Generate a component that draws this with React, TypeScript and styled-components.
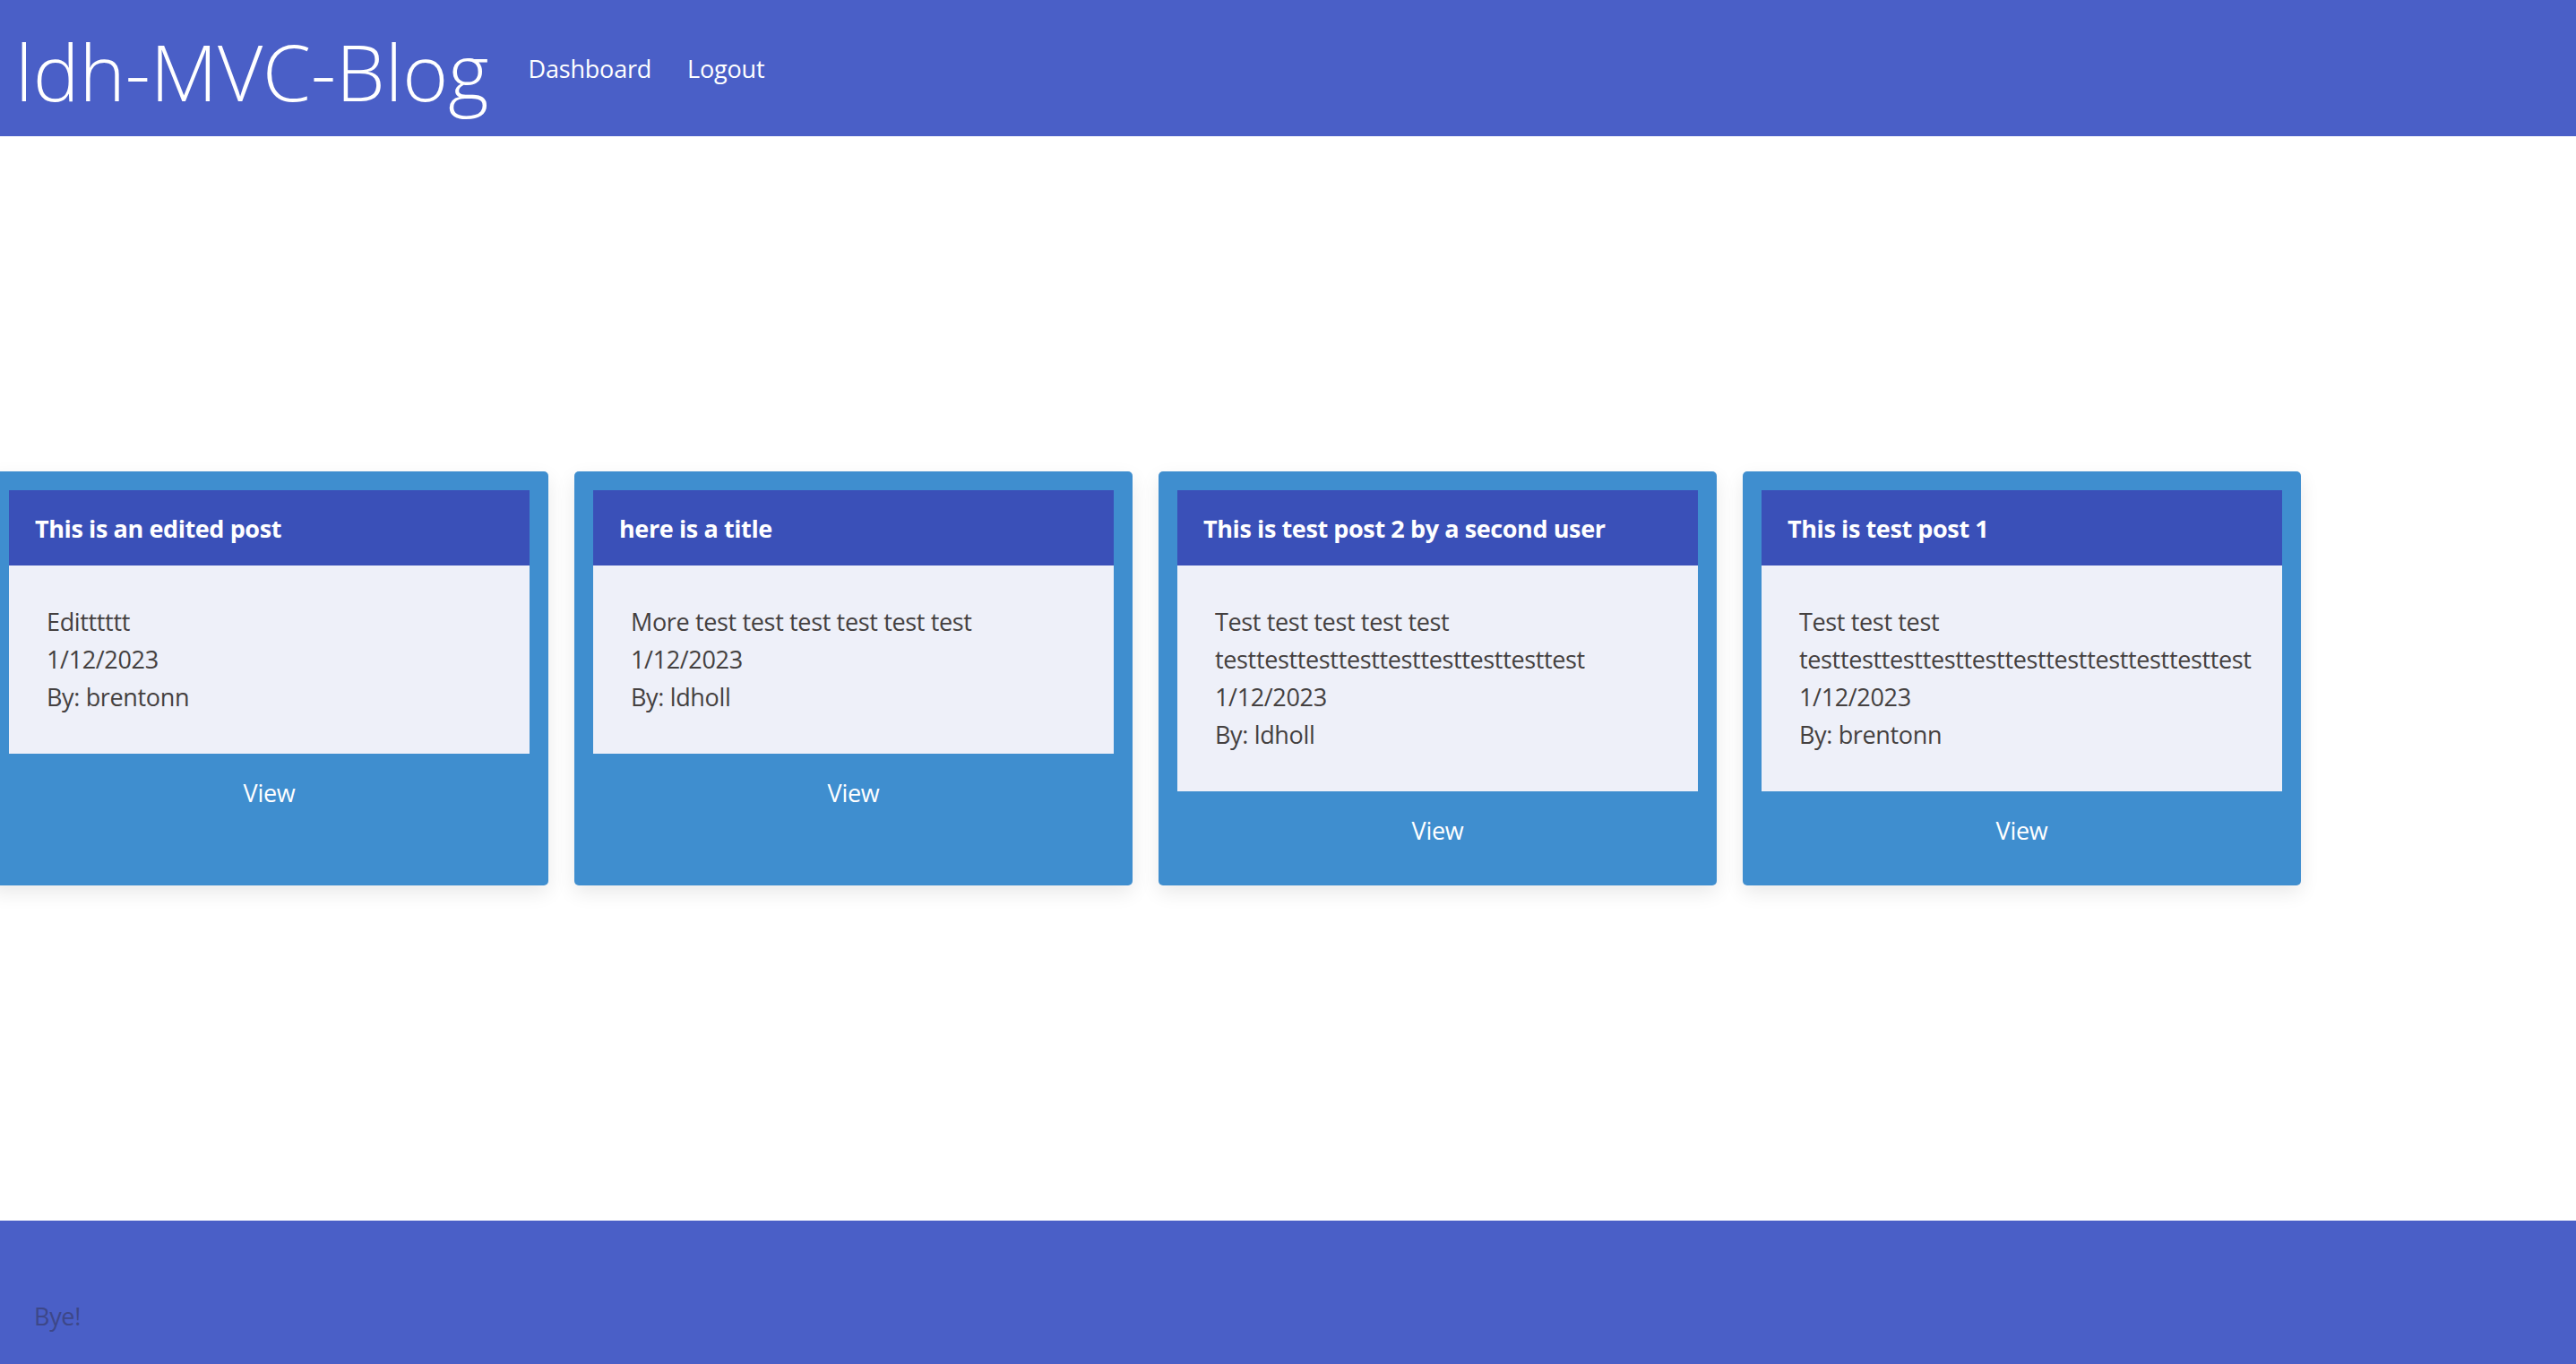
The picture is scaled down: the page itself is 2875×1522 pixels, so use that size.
import React from "react";
import styled, { createGlobalStyle } from "styled-components";

const GlobalStyle = createGlobalStyle`
  html, body {
    margin: 0;
    padding: 0;
    background: #ffffff;
    font-family: "Open Sans", "Noto Sans", Arial, sans-serif;
  }
  #root {
    min-height: 100vh;
  }
  * { box-sizing: border-box; }
`;

const Page = styled.div`
  min-height: 100vh;
  display: flex;
  flex-direction: column;
  overflow: hidden;
`;

const Header = styled.header`
  height: 152px;
  flex-shrink: 0;
  background: #4a5fc7;
  display: flex;
  align-items: center;
  padding: 0 0 0 17px;
`;

const Brand = styled.h1`
  margin: 0;
  font-family: "Open Sans", "Noto Sans", sans-serif;
  font-weight: 300;
  font-size: 87px;
  line-height: 1;
  color: #ffffff;
  padding-top: 6px;
`;

const Nav = styled.nav`
  display: flex;
  align-items: center;
  gap: 40px;
  margin-left: 44px;
`;

const NavLink = styled.a`
  color: #ffffff;
  text-decoration: none;
  font-size: 27px;
  letter-spacing: -0.2px;
  line-height: 1;
`;

const Main = styled.main`
  flex: 1;
  display: flex;
  align-items: center;
`;

const CardRow = styled.section`
  display: flex;
  align-items: stretch;
  gap: 29px;
  margin-left: -11px;
`;

const Card = styled.article`
  width: 623px;
  flex-shrink: 0;
  background: #3f8ecf;
  border-radius: 5px;
  padding: 21px 21px 40px;
  box-shadow: 0 8px 22px rgba(0, 0, 0, 0.09);
  display: flex;
  flex-direction: column;
`;

const CardHeader = styled.h2`
  margin: 0;
  height: 84px;
  background: #3a50b8;
  color: #ffffff;
  font-size: 27px;
  font-weight: 700;
  letter-spacing: -0.4px;
  display: flex;
  align-items: center;
  padding: 0 29px;
`;

const CardBody = styled.div`
  background: #eef0f9;
  padding: 42px 38px 42px 42px;
  color: #444040;
  font-size: 27px;
  line-height: 42px;
  letter-spacing: -0.35px;
`;

const BodyLine = styled.p`
  margin: 0;
`;

const ViewLink = styled.a`
  display: block;
  margin-top: 23px;
  text-align: center;
  color: #ffffff;
  font-size: 27px;
  line-height: 42px;
  text-decoration: none;
  letter-spacing: -0.3px;
`;

const Footer = styled.footer`
  height: 160px;
  flex-shrink: 0;
  background: #4a5fc7;
  display: flex;
  align-items: flex-end;
  padding: 0 38px 32px;
`;

const FooterText = styled.p`
  margin: 0;
  color: #3d4788;
  font-size: 27px;
  line-height: 42px;
  letter-spacing: -0.3px;
`;

type Post = {
  title: string;
  content: string;
  date: string;
  author: string;
};

const posts: Post[] = [
  { title: "This is an edited post", content: "Editttttt", date: "1/12/2023", author: "brentonn" },
  { title: "here is a title", content: "More test test test test test test", date: "1/12/2023", author: "ldholl" },
  {
    title: "This is test post 2 by a second user",
    content: "Test test test test test testtesttesttesttesttesttesttesttest",
    date: "1/12/2023",
    author: "ldholl",
  },
  {
    title: "This is test post 1",
    content: "Test test test testtesttesttesttesttesttesttesttesttesttest",
    date: "1/12/2023",
    author: "brentonn",
  },
];

export default function App() {
  return (
    <>
      <GlobalStyle />
      <Page>
        <Header>
          <Brand>ldh-MVC-Blog</Brand>
          <Nav>
            <NavLink href="#">Dashboard</NavLink>
            <NavLink href="#">Logout</NavLink>
          </Nav>
        </Header>
        <Main>
          <CardRow>
            {posts.map((p) => (
              <Card key={p.title}>
                <CardHeader>{p.title}</CardHeader>
                <CardBody>
                  <BodyLine>{p.content}</BodyLine>
                  <BodyLine>{p.date}</BodyLine>
                  <BodyLine>By: {p.author}</BodyLine>
                </CardBody>
                <ViewLink href="#">View</ViewLink>
              </Card>
            ))}
          </CardRow>
        </Main>
        <Footer>
          <FooterText>Bye!</FooterText>
        </Footer>
      </Page>
    </>
  );
}
